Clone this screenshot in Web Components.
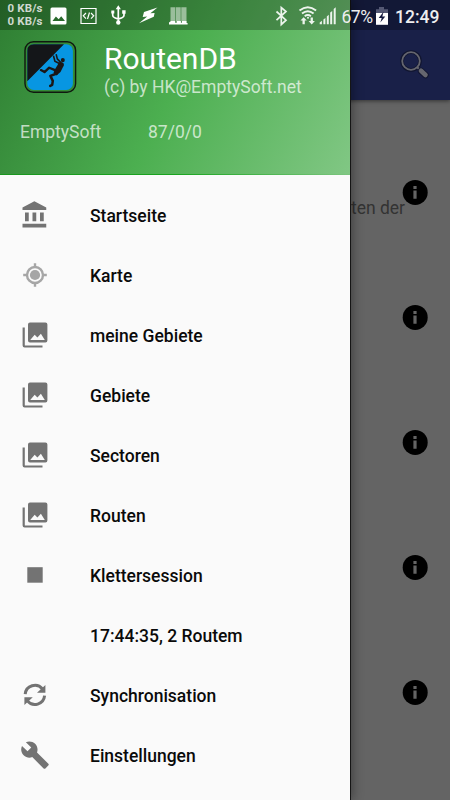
<!DOCTYPE html>
<html lang="de"><head><meta charset="utf-8"><title>RoutenDB</title>
<style>html,body{margin:0;height:100%;overflow:hidden;font-family:Roboto,sans-serif}</style></head>
<body><routen-app></routen-app>
<script>
const define=(name,html)=>customElements.define(name,class extends HTMLElement{
  constructor(){super();this.attachShadow({mode:'open'}).innerHTML=html;}
});
const icons={
 bank:'<path transform="scale(1.25)" d="M4 10v7h3v-7H4zm6 0v7h3v-7h-3zM2 22h19v-3H2v3zm14-12v7h3v-7h-3zm-4.5-9L2 6v2h19V6l-9.5-5z"/>',
 target:'<g fill="none" stroke="#a6a6a6" stroke-width="2.4"><circle cx="15" cy="15" r="8"/><path d="M15 3.2v4M15 22.8v4M3.2 15h4M22.8 15h4"/></g><circle cx="15" cy="15" r="5.1" fill="#a6a6a6"/>',
 gallery:'<path d="M10 2.4h15.4q2 0 2 2v16q0 2-2 2H10q-2 0-2-2v-16q0-2 2-2zM10.2 20h14.6l-3.9-6.2-3.5 3.6-2.7-2.6z" fill-rule="evenodd"/><path d="M2.6 7.4h2.2v18h17.7v2.2H4.6q-2 0-2-2z"/>',
 stop:'<path d="M7.3 7.2h15.4v15.5H7.3z"/>',
 sync:'<g fill="none" stroke="#737373" stroke-width="3"><path d="M5.2 14.2A9.7 9.7 0 0 1 22.5 9"/><path d="M24.6 15.7A9.7 9.7 0 0 1 7.4 20.9"/></g><path d="M25.4 5.1v7.7h-8.4zM4.4 25.1v-7.9h8.4z"/>',
 wrench:'<path transform="translate(0 .1) scale(1.25)" d="M22.7 19l-9.1-9.1c.9-2.3.4-5-1.5-6.9-2-2-5-2.4-7.4-1.3L9 6 6 9 1.6 4.7C.4 7.1.9 10.1 2.9 12.1c1.9 1.9 4.6 2.4 6.9 1.5l9.1 9.1c.4.4 1 .4 1.4 0l2.3-2.3c.5-.4.5-1.1.1-1.4z"/>',
 none:''
};
customElements.define('menu-icon',class extends HTMLElement{
 connectedCallback(){this.attachShadow({mode:'open'}).innerHTML=`<style>:host{display:block;width:30px;height:30px}svg{display:block}</style><svg width="30" height="30" viewBox="0 0 30 30" fill="#737373">${icons[this.getAttribute('name')]||''}</svg>`;}
});
customElements.define('menu-item',class extends HTMLElement{
 connectedCallback(){this.attachShadow({mode:'open'}).innerHTML=`<style>:host{display:grid;grid-template-columns:30px 1fr;column-gap:40px;align-items:center;height:60px;padding-left:20px;font:500 17.5px/22px Roboto,sans-serif;color:#0a0a0a}span{padding-top:2px}</style><menu-icon name="${this.getAttribute('icon')}"></menu-icon><span><slot></slot></span>`;}
});
define('app-logo',`<style>:host{display:block;width:54px;height:54px}svg{display:block}</style>
<svg width="54" height="54" viewBox="0 -.7 54 54"><rect x="1" y="1" width="50.6" height="50.6" rx="8.5" fill="#348b37" stroke="#10180f" stroke-width="1.4"/>
<rect x="3.3" y="3.6" width="45.6" height="45.6" rx="6.5" fill="#0796e2"/><path d="M9.8 3.6H40L3.3 40.6V10.1q0-6.5 6.5-6.5z" fill="#141619"/>
<ellipse cx="38.8" cy="19.4" rx="2" ry="2.2" fill="#1b1716"/>
<path d="M35 21.9h3.6q2 .8 1.2 3l-3.3 6.5-4 3.5-3-3 1.7-3.6z" fill="#1b1716"/>
<g fill="none" stroke="#1b1716" stroke-linejoin="round" stroke-linecap="round"><path d="M29.6 15.6l1.3 5 4.5 2.2M32.3 14.2l1 4 3.8 4" stroke-width="1.6"/><path d="M31 29.4l-5.8-2.4-4.7 4.4-3.6-2" stroke-width="2.3"/><path d="M32.8 32.8l-6.4 2.4 2.4 5-.6 4-2 1" stroke-width="2.5"/></g></svg>`);
define('drawer-header',`<style>
:host{display:flex;flex-direction:column;box-sizing:border-box;height:175px;padding:40px 0 0 20px;background:linear-gradient(90deg,#19961e,#18a51e 50%,#7cc57f) 0 174px/100% 1px no-repeat,linear-gradient(116.57deg,#2e7d32,#4caf50 50%,#81c784);color:rgba(255,255,255,.7);font-size:17.5px}
.brand{display:grid;grid-template-columns:54px 1fr;column-gap:26px;padding-left:4px}.title{font-size:30px;line-height:36px;color:#fff;padding-top:1px}.by{line-height:20px}.stats{display:grid;grid-template-columns:128px 1fr;line-height:22px;padding-top:23.5px}
</style><div class="brand"><app-logo></app-logo><div><div class="title">RoutenDB</div><div class="by">(c) by HK@EmptySoft.net</div></div></div><div class="stats"><span>EmptySoft</span><span>87/0/0</span></div>`);
define('nav-drawer',`<style>:host{display:block;width:350px;height:800px;background:#fafafa;box-shadow:1px 0 0 #151515,3px 0 10px rgba(0,0,0,.35)}nav{padding-top:10px}</style><drawer-header></drawer-header><nav><slot></slot></nav>`);
define('info-icon',`<style>:host{display:block;width:26px;height:26px}svg{display:block}</style><svg width="26" height="26" viewBox="0 0 26 26"><circle cx="13.2" cy="13.4" r="12.5"/><path d="M11.4 7h3.2v3h-3.2zM11.4 11.6h3.2v8.2h-3.2z" fill="#646464"/></svg>`);
define('app-page',`<style>:host{display:block;width:450px;height:800px;background:#646464}
header{display:flex;justify-content:flex-end;box-sizing:border-box;height:100px;padding:49px 19px 0 0;background:#192048;box-shadow:0 1px 4px rgba(0,0,0,.5)}
section{display:grid;grid-template-columns:1fr 26px;height:125px;padding-right:22px}section:first-of-type{padding-top:79px}p{margin:0;text-align:right;color:#333;font-size:17.5px;line-height:22px;padding-top:18px;margin-right:-3px}main{overflow:hidden;height:700px}</style>
<header><svg width="32" height="32" viewBox="0 0 32 32" fill="none"><circle cx="12" cy="12" r="9" stroke="#11152f" stroke-width="3.6"/><circle cx="12" cy="12" r="8.8" stroke="#65666f" stroke-width="1.8"/><path d="M18 18l3.5 3.5" stroke="#65666f" stroke-width="2"/><path d="M22 22l4.5 4" stroke="#11152f" stroke-width="6.4" stroke-linecap="round"/><path d="M22 21.8l4.5 4.2" stroke="#65666f" stroke-width="4.6" stroke-linecap="round"/></svg></header>
<main><section><p>ten der</p><info-icon></info-icon></section><section><p></p><info-icon></info-icon></section><section><p></p><info-icon></info-icon></section><section><p></p><info-icon></info-icon></section><section><p></p><info-icon></info-icon></section></main>`);
define('status-bar',`<style>:host{display:flex;align-items:center;box-sizing:border-box;height:30px;padding-left:7.5px;background:rgba(0,0,0,.25);color:#eee}
.net{display:grid;grid-template-rows:13px 13px;width:35px;font:700 11.5px/13px Roboto,sans-serif;white-space:nowrap;color:#cfd8cf;letter-spacing:.15px}.left{display:block}.right{display:block;margin-left:75px}.pct{width:33px;font-size:17.5px;letter-spacing:-.5px;margin-left:5px;padding-top:3px}.time{font-size:17.5px;font-weight:500;margin-left:6.5px;padding-top:3px}</style>
<div class="net"><span>0 KB/s</span><span>0 KB/s</span></div>
<svg class="left" width="155" height="30" viewBox="42.5 0 155 30" fill="#fff"><path fill-rule="evenodd" d="M51.5 7.5h13q1.5 0 1.5 1.5v14q0 1.5-1.5 1.5h-13q-1.5 0-1.5-1.5V9q0-1.5 1.5-1.5zM52 21h12.5l-3.8-4.8-2.5 3-2.8-2.8z"/><path d="M80.5 8.5h15v15h-15zM85.5 13l-2.7 2.8 2.7 2.8M90.5 13l2.7 2.8-2.7 2.8M89 12.5l-2 6.5" fill="none" stroke="#fff" stroke-width="1.2"/>
<path d="M117.8 8v14M112.2 12v3.2q0 2 2 2.5l3.6 1.3 3.7-1.3q2-.5 2-2.5V12" fill="none" stroke="#fff" stroke-width="1.7"/><path d="M117.8 5.3l2.6 3.9h-5.2zM110.8 10.4h3v3h-3zM121.7 10.3h3.4v3.4h-3.4z"/><circle cx="117.8" cy="22.5" r="2.2"/>
<path d="M157 7.5l-13.5 4.5-1.3 5 4.5-.4-8.2 6.7 14.8-6.5.8-3.9-4.2.3z"/><path d="M170 7.3h4.8v14H170zM175.4 7.3h4.8v14h-4.8zM180.8 7.3h5.2v14h-5.2z" opacity=".5"/><path d="M168.5 24.5v-2l2-1.5h4.2v1.8h1.5V21h4.2v1.8h1V21h4.7v2h1v1.5z"/></svg>
<svg class="right" width="64" height="30" viewBox="273 0 64 30" fill="#edf4ed"><path d="M276.5 11.5l9.5 8.7-4.7 4.3v-17l4.7 4-9.5 8.7" fill="none" stroke="#edf4ed" stroke-width="1.7"/>
<g fill="none" stroke="#edf4ed" stroke-width="1.9"><path d="M299.5 10.6q8.3-6.8 16.6 0M302 13.6q5.8-4.8 11.6 0M304.7 16.2q3.1-2.4 6.2 0"/></g><path d="M303.6 17.2l3.2 3.3h-2v3.7h-2.3v-3.7h-2zM311.7 24.4l3.2-3.4h-2v-3.4h-2.3V21h-2z"/><circle cx="308" cy="17.8" r="1"/><path d="M319.7 22.4l2.2-1.6v3.4h-2.2zM323.4 19.5l2-1.6v6.3h-2zM326.8 16.4l2-1.6v9.4h-2zM330.2 12.6l2-1.6v13.2h-2zM333.7 8.9l2-1.6v16.9h-2z"/></svg>
<span class="pct">67%</span><svg width="14" height="30" viewBox="376 0 14 30"><path d="M380 7h5v2.2h4V13h-12V9.2h3z" fill="#545874"/><path d="M377 13h12v11.8h-12z" fill="#fff"/><path d="M384.7 11.5l-5 6.6h3l-1.4 4.5 5-6h-3z" fill="#151a3f"/></svg><span class="time">12:49</span>`);
define('routen-app',`<style>:host{display:grid;width:450px;height:800px;overflow:hidden}app-page,nav-drawer,status-bar{grid-area:1/1;z-index:0}status-bar{align-self:start}</style><app-page></app-page><nav-drawer>
<menu-item icon="bank">Startseite</menu-item><menu-item icon="target">Karte</menu-item><menu-item icon="gallery">meine Gebiete</menu-item><menu-item icon="gallery">Gebiete</menu-item><menu-item icon="gallery">Sectoren</menu-item><menu-item icon="gallery">Routen</menu-item><menu-item icon="stop">Klettersession</menu-item><menu-item icon="none">17:44:35, 2 Routem</menu-item><menu-item icon="sync">Synchronisation</menu-item><menu-item icon="wrench">Einstellungen</menu-item></nav-drawer><status-bar></status-bar>`);
</script></body></html>
